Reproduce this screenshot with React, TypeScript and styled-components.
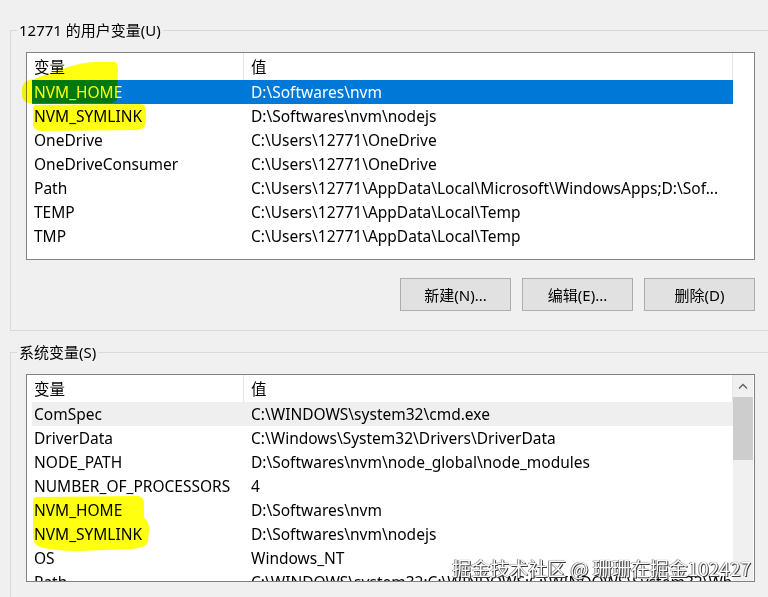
import React from "react";
import styled, { createGlobalStyle } from "styled-components";

const GlobalStyle = createGlobalStyle`
  html, body { margin: 0; padding: 0; background: #f0f0f0; }
  body {
    font-family: "Noto Sans", "Noto Sans CJK SC", sans-serif;
    font-size: 15.5px;
    color: #000;
  }
`;

const Page = styled.div`
  position: relative;
  width: 768px;
  height: 597px;
  overflow: hidden;
  box-sizing: border-box;
  padding: 20px 0 0 10px;
  background: #f0f0f0;
`;

const Group = styled.fieldset<{ $gapTop?: number }>`
  margin: ${(p) => p.$gapTop ?? 0}px 0 0 0;
  padding: 12px 0 19px 15px;
  border: 1px solid #d9d9d9;
  border-right: none;
  min-width: 0;
  width: 758px;
  box-sizing: border-box;
`;

const Legend = styled.legend`
  margin-left: -9px;
  padding: 0 2px;
  font-family: "Noto Sans", "Noto Sans CJK SC", sans-serif;
  font-size: 15px;
  line-height: 20px;
`;

const ListBox = styled.div`
  width: 729px;
  height: 208px;
  box-sizing: border-box;
  border: 1px solid #828282;
  background: #fff;
  display: flex;
  overflow: hidden;
`;

const ListBody = styled.div`
  width: 706px;
  padding-left: 5px;
  box-sizing: border-box;
  display: flex;
  flex-direction: column;
`;

const HeaderRow = styled.div`
  display: flex;
  height: 27px;
  flex: none;
  align-items: center;
`;

const HeaderCell = styled.div<{ $w?: number }>`
  ${(p) => (p.$w ? `width: ${p.$w}px; flex: none;` : "flex: 1;")}
  height: 100%;
  display: flex;
  align-items: center;
  box-sizing: border-box;
  padding-left: ${(p) => (p.$w ? 2 : 7)}px;
  border-right: 1px solid #e5e5e5;
  white-space: nowrap;
`;

const Row = styled.div<{ $state?: "selected" | "hover" }>`
  display: flex;
  height: 24px;
  flex: none;
  align-items: center;
  background: ${(p) =>
    p.$state === "selected" ? "#0078d7" : p.$state === "hover" ? "#efefef" : "transparent"};
  color: ${(p) => (p.$state === "selected" ? "#fff" : "#000")};
`;

const NameCell = styled.div`
  width: 212px;
  flex: none;
  padding-left: 2px;
  box-sizing: border-box;
  white-space: nowrap;
  overflow: hidden;
`;

const ValueCell = styled.div`
  flex: 1;
  min-width: 0;
  padding-left: 7px;
  white-space: nowrap;
  overflow: hidden;
`;

const ScrollGutter = styled.div<{ $bar?: boolean }>`
  width: 20px;
  flex: none;
  margin-left: auto;
  margin-right: 1px;
  display: flex;
  flex-direction: column;
  background: ${(p) => (p.$bar ? "#f0f0f0" : "#fff")};
`;

const ArrowButton = styled.div`
  height: 22px;
  display: flex;
  align-items: center;
  justify-content: center;
`;

const Thumb = styled.div`
  height: 63px;
  background: #cdcdcd;
`;

const ButtonBar = styled.div`
  display: flex;
  justify-content: flex-end;
  gap: 11px;
  width: 729px;
  margin-top: 18px;
`;

const Button = styled.button`
  width: 111px;
  height: 33px;
  box-sizing: border-box;
  border: 1px solid #adadad;
  background: #e1e1e1;
  font-family: "Noto Sans", "Noto Sans CJK SC", sans-serif;
  font-size: 15px;
  color: #000;
  padding: 0;
  margin: 0;
`;

const Highlights = styled.svg`
  position: absolute;
  left: 0;
  top: 0;
  width: 768px;
  height: 597px;
  pointer-events: none;
  mix-blend-mode: multiply;
`;

const Watermark = styled.div`
  position: absolute;
  right: 17px;
  bottom: 17px;
  font-family: "Noto Sans CJK SC", "Noto Sans", sans-serif;
  font-size: 19px;
  line-height: 24px;
  color: #ffffff;
  white-space: nowrap;
  text-shadow: 1px 1px 0 #3a3a3a, 0 0 1px #555, -1px 0 0 #9a9a9a;
`;

type Item = { name: string; value: string; state?: "selected" | "hover" };

const userVars: Item[] = [
  { name: "NVM_HOME", value: "D:\\Softwares\\nvm", state: "selected" },
  { name: "NVM_SYMLINK", value: "D:\\Softwares\\nvm\\nodejs" },
  { name: "OneDrive", value: "C:\\Users\\12771\\OneDrive" },
  { name: "OneDriveConsumer", value: "C:\\Users\\12771\\OneDrive" },
  { name: "Path", value: "C:\\Users\\12771\\AppData\\Local\\Microsoft\\WindowsApps;D:\\Sof..." },
  { name: "TEMP", value: "C:\\Users\\12771\\AppData\\Local\\Temp" },
  { name: "TMP", value: "C:\\Users\\12771\\AppData\\Local\\Temp" },
];

const sysVars: Item[] = [
  { name: "ComSpec", value: "C:\\WINDOWS\\system32\\cmd.exe", state: "hover" },
  { name: "DriverData", value: "C:\\Windows\\System32\\Drivers\\DriverData" },
  { name: "NODE_PATH", value: "D:\\Softwares\\nvm\\node_global\\node_modules" },
  { name: "NUMBER_OF_PROCESSORS", value: "4" },
  { name: "NVM_HOME", value: "D:\\Softwares\\nvm" },
  { name: "NVM_SYMLINK", value: "D:\\Softwares\\nvm\\nodejs" },
  { name: "OS", value: "Windows_NT" },
  { name: "Path", value: "C:\\WINDOWS\\system32;C:\\WINDOWS;C:\\WINDOWS\\System32\\Wbem;C:\\WINDOWS\\System32\\WindowsPowerShell\\v1.0\\" },
];

function VarList({ items, scroll }: { items: Item[]; scroll?: boolean }) {
  return (
    <ListBox>
      <ListBody>
        <HeaderRow>
          <HeaderCell $w={212}>变量</HeaderCell>
          <HeaderCell>值</HeaderCell>
        </HeaderRow>
        {items.map((it) => (
          <Row key={it.name} $state={it.state}>
            <NameCell>{it.name}</NameCell>
            <ValueCell>{it.value}</ValueCell>
          </Row>
        ))}
      </ListBody>
      <ScrollGutter $bar={scroll}>
        {scroll && (
          <>
            <ArrowButton>
              <svg width="10" height="6" viewBox="0 0 10 6">
                <polyline points="1,5.5 5,1.5 9,5.5" fill="none" stroke="#606060" strokeWidth="1.3" />
              </svg>
            </ArrowButton>
            <Thumb />
          </>
        )}
      </ScrollGutter>
    </ListBox>
  );
}

export default function App() {
  return (
    <>
      <GlobalStyle />
      <Page>
        <Group>
          <Legend>12771 的用户变量(U)</Legend>
          <VarList items={userVars} />
          <ButtonBar>
            <Button>新建(N)...</Button>
            <Button>编辑(E)...</Button>
            <Button>删除(D)</Button>
          </ButtonBar>
        </Group>
        <Group $gapTop={11}>
          <Legend>系统变量(S)</Legend>
          <VarList items={sysVars} scroll />
        </Group>
        <Highlights viewBox="0 0 768 597">
          <path
            fill="#ffff10"
            d="M22 88 Q23 80 34 79 L62 69 Q82 62 96 62 L115 62 Q118 63 118 70 L117 99 Q116 103 110 103 L28 103 Q22 101 22 95 Z"
          />
          <path
            fill="#ffff10"
            d="M36 105 L140 104 Q146 104 146 110 L146 123 Q145 129 138 130 L42 131 Q33 131 33 124 L33 109 Q33 105 36 105 Z"
          />
          <path
            fill="#ffff10"
            d="M36 497 L138 496 Q144 497 144 503 L144 517 L147 521 Q149 524 149 530 L148 542 Q146 548 130 549 L80 551 Q50 551 38 546 Q33 543 33 536 L33 502 Q33 497 36 497 Z"
          />
        </Highlights>
        <Watermark>掘金技术社区 @ 珊珊在掘金102427</Watermark>
      </Page>
    </>
  );
}
